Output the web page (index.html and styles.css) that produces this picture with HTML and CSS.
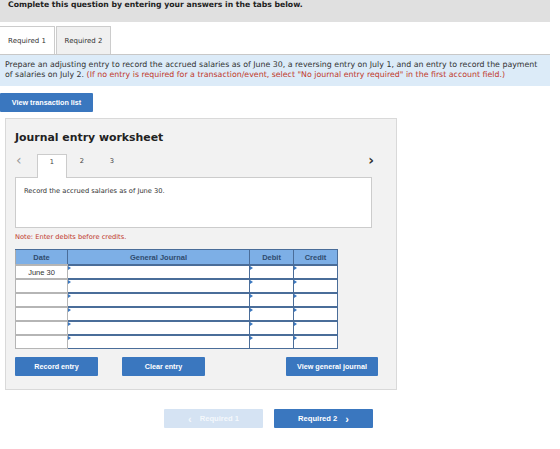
FILE: index.html
```html
<!DOCTYPE html>
<html lang="en">
<head>
    <meta charset="UTF-8">
    <meta name="viewport" content="width=device-width, initial-scale=1.0">
    <title>Journal entry worksheet</title>
    <link rel="stylesheet" href="styles.css">
</head>
<body>

    <div class="top-bar">Complete this question by entering your answers in the tabs below.</div>

    <div class="req-tabs">
        <div class="req-tab active">Required 1</div>
        <div class="req-tab">Required 2</div>
    </div>

    <div class="info-box">
        Prepare an adjusting entry to record the accrued salaries as of June 30, a reversing entry on July 1, and an entry to record the payment of salaries on July 2. <span class="red">(If no entry is required for a transaction/event, select "No journal entry required" in the first account field.)</span>
    </div>

    <button type="button" class="btn btn-list">View transaction list</button>

    <div class="worksheet">
        <h2>Journal entry worksheet</h2>

        <div class="step-nav">
            <span class="arrow arrow-left">&lsaquo;</span>
            <span class="step active">1</span>
            <span class="step">2</span>
            <span class="step">3</span>
            <span class="arrow arrow-right">&rsaquo;</span>
        </div>
        <div class="step-box">Record the accrued salaries as of June 30.</div>

        <p class="note">Note: Enter debits before credits.</p>

        <table class="journal">
            <thead>
                <tr>
                    <th class="c-date">Date</th>
                    <th class="c-acc">General Journal</th>
                    <th class="c-num">Debit</th>
                    <th class="c-num">Credit</th>
                </tr>
            </thead>
            <tbody>
                <tr>
                    <td class="c-date">June 30</td>
                    <td class="c-acc"><span class="mark"></span></td>
                    <td class="c-num"><span class="mark"></span></td>
                    <td class="c-num"><span class="mark"></span></td>
                </tr>
                <tr>
                    <td class="c-date"></td>
                    <td class="c-acc"><span class="mark"></span></td>
                    <td class="c-num"><span class="mark"></span></td>
                    <td class="c-num"><span class="mark"></span></td>
                </tr>
                <tr>
                    <td class="c-date"></td>
                    <td class="c-acc"><span class="mark"></span></td>
                    <td class="c-num"><span class="mark"></span></td>
                    <td class="c-num"><span class="mark"></span></td>
                </tr>
                <tr>
                    <td class="c-date"></td>
                    <td class="c-acc"><span class="mark"></span></td>
                    <td class="c-num"><span class="mark"></span></td>
                    <td class="c-num"><span class="mark"></span></td>
                </tr>
                <tr>
                    <td class="c-date"></td>
                    <td class="c-acc"><span class="mark"></span></td>
                    <td class="c-num"><span class="mark"></span></td>
                    <td class="c-num"><span class="mark"></span></td>
                </tr>
                <tr>
                    <td class="c-date"></td>
                    <td class="c-acc"><span class="mark"></span></td>
                    <td class="c-num"><span class="mark"></span></td>
                    <td class="c-num"><span class="mark"></span></td>
                </tr>
            </tbody>
        </table>

        <div class="actions">
            <button type="button" class="btn">Record entry</button>
            <button type="button" class="btn btn-clear">Clear entry</button>
            <button type="button" class="btn btn-view">View general journal</button>
        </div>
    </div>

    <div class="bottom-nav">
        <button type="button" class="btn btn-nav disabled"><span class="chev">&lsaquo;</span> Required 1</button>
        <button type="button" class="btn btn-nav">Required 2 <span class="chev">&rsaquo;</span></button>
    </div>

</body>
</html>
```

FILE: styles.css
```css
body {
    margin: 0;
    font-family: "DejaVu Sans", Verdana, sans-serif;
    font-size: 7px;
    color: #222;
    background-color: #fff;
}
.top-bar {
    width: 542px;
    height: 22px;
    padding-left: 8px;
    background-color: #e0e0e0;
    font-size: 7.7px;
    font-weight: bold;
    line-height: 9px;
}

/* onglets Required */
.req-tabs {
    display: flex;
    margin-top: 4px;
    height: 28px;
}
.req-tab {
    width: 55px;
    display: flex;
    align-items: center;
    justify-content: center;
    background-color: #f0f0f0;
    border: 1px solid #ccc;
    border-bottom: none;
    box-sizing: border-box;
    color: #333;
}
.req-tab.active {
    background-color: #fff;
    border-left: none;
    margin-right: 1px;
}
.info-box {
    width: 535px;
    padding: 5px 10px 6px 5px;
    border-top: 1px solid #c8c8c8;
    background-color: #dcebf8;
    font-size: 7.85px;
    line-height: 10px;
    color: #333;
}
.red {
    color: #c0392b;
}

/* boutons */
.btn {
    display: flex;
    align-items: center;
    justify-content: center;
    height: 19px;
    width: 83px;
    padding: 0;
    border: none;
    border-radius: 1px;
    background-color: #3a77bf;
    color: #fff;
    font-family: "Liberation Sans", Arial, sans-serif;
    font-size: 7.2px;
    font-weight: bold;
    cursor: pointer;
}
.btn-list {
    width: 93px;
    margin-top: 7px;
}

/* bloc de la feuille */
.worksheet {
    width: 381px;
    height: 270px;
    margin: 6px 0 0 5px;
    padding: 0 0 0 9px;
    border: 1px solid #d9d9d9;
    background-color: #f2f2f2;
}
.worksheet h2 {
    margin: 11px 0 0 0;
    font-size: 10.9px;
    line-height: 15px;
    color: #222;
}
.step-nav {
    display: flex;
    align-items: stretch;
    height: 24px;
    margin-top: 8px;
    width: 357px;
}
.arrow {
    font-size: 14px;
    line-height: 15px;
}
.arrow-left {
    width: 22px;
    padding-left: 1px;
    color: #999;
    box-sizing: border-box;
}
.arrow-right {
    margin-left: auto;
    color: #333;
    font-weight: bold;
    margin-right: -2px;
}
.step {
    width: 30px;
    text-align: center;
    padding-top: 4px;
    line-height: 9px;
    box-sizing: border-box;
    color: #444;
    font-size: 6.7px;
}
.step.active {
    background-color: #fff;
    border: 1px solid #ccc;
    border-bottom: none;
    padding-top: 3px;
    position: relative;
    top: 1px;
}
.step-box {
    width: 347px;
    height: 41px;
    padding: 8px 0 0 8px;
    border: 1px solid #ccc;
    background-color: #fff;
    font-size: 6.7px;
    line-height: 10px;
    color: #333;
}
.note {
    margin: 4px 0 0 0;
    font-size: 6.7px;
    line-height: 10px;
    color: #c0392b;
}

/* tableau du journal */
.journal {
    margin-top: 7px;
    border-collapse: collapse;
    font-family: "Liberation Sans", Arial, sans-serif;
    font-size: 7.5px;
}
.journal th {
    height: 14px;
    padding: 0;
    background-color: #7dafe6;
    border: 1px solid #4a6d99;
    color: #2f4b6e;
    font-weight: bold;
}
.journal th.c-date {
    border-left-color: #aaa;
}
.journal td {
    height: 12px;
    padding: 0;
    background-color: #fff;
    border: 1px solid #4a6d99;
    border-top-width: 2px;
    position: relative;
}
.journal td.c-date {
    border: 1px solid #b5b5b5;
    border-top-width: 2px;
    text-align: center;
    color: #333;
}
.c-date {
    width: 51px;
}
.c-acc {
    width: 181px;
}
.c-num {
    width: 43px;
}
.mark {
    position: absolute;
    left: 0;
    top: 0;
    width: 0;
    height: 0;
    border-top: 2px solid transparent;
    border-bottom: 2px solid transparent;
    border-left: 3px solid #3a77bf;
}
.actions {
    display: flex;
    margin-top: 8px;
}
.btn-clear {
    margin-left: 24px;
}
.btn-view {
    width: 92px;
    margin-left: 81px;
}

/* navigation bas de page */
.bottom-nav {
    display: flex;
    margin: 19px 0 0 164px;
    gap: 11px;
}
.btn-nav {
    width: 99px;
    gap: 8px;
    font-size: 7.6px;
}
.btn-nav.disabled {
    background-color: #d5e3f3;
    color: #f4f8fc;
}
.chev {
    font-size: 11px;
    line-height: 10px;
}
```
